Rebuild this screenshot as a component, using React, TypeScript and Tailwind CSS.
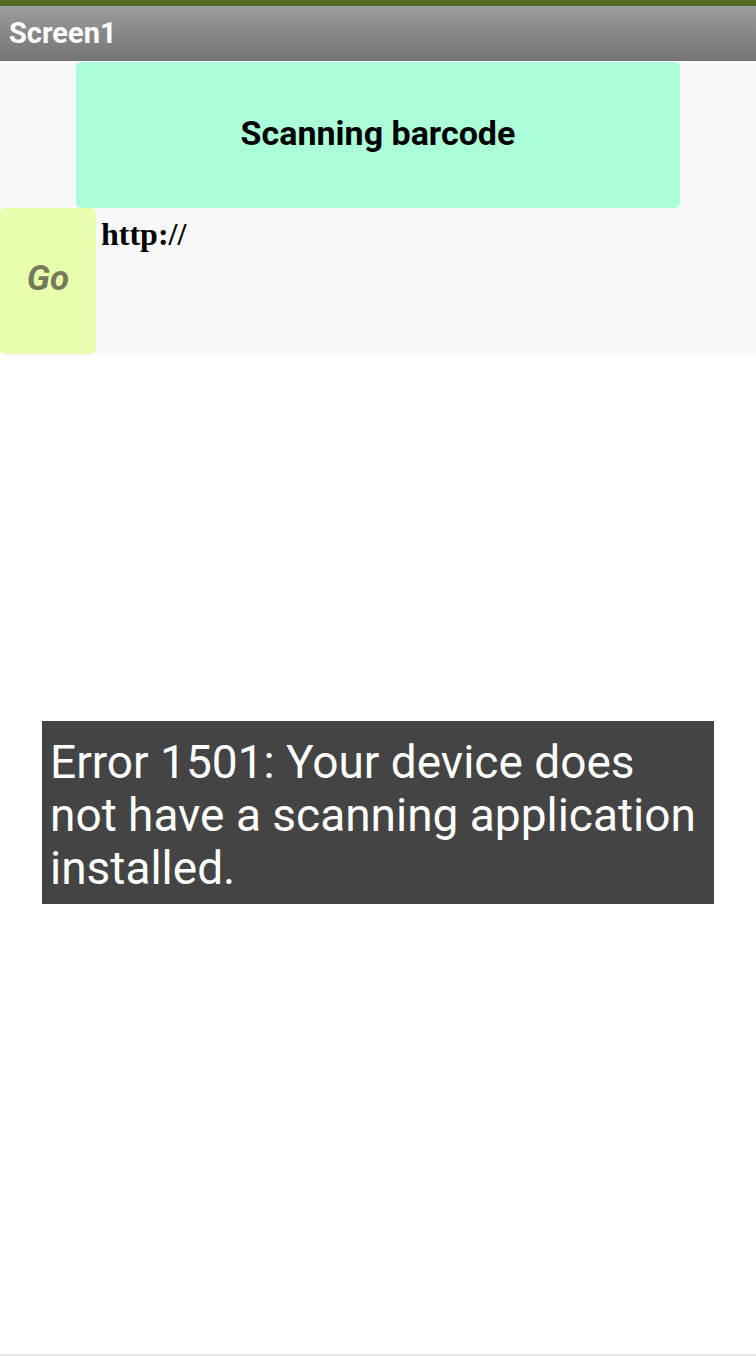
export default function App() {
  return (
    <main className="relative flex h-[1356px] w-[756px] flex-col overflow-hidden bg-white" style={{ fontFamily: "Roboto, 'Liberation Sans', sans-serif" }}>
      <div className="h-[6px] bg-[#546b24]" />
      <header className="flex h-[55px] items-center bg-gradient-to-b from-[#9c9c9c] to-[#747474] px-[9px]">
        <span className="text-[29px] font-bold leading-none text-white">Screen1</span>
      </header>

      <section className="flex h-[294px] flex-col bg-[#f9f9f9]">
        <div className="flex pl-[76px] pt-px">
          <button className="flex h-[146px] w-[604px] items-center justify-center rounded-[5px] bg-[#aaffd9] pb-[4px] text-[34px] font-bold text-black">
            Scanning barcode
          </button>
        </div>
        <div className="flex">
          <button className="flex h-[146px] w-[96px] items-center justify-center rounded-[5px] bg-[#e8ffb0] pb-[4px] text-[35px] font-bold italic text-[#76795a]">
            Go
          </button>
          <p
            className="pl-[5px] pt-[10px] text-[32px] font-bold leading-none text-black"
            style={{ fontFamily: "'Liberation Serif', 'DejaVu Serif', serif" }}
          >
            http://
          </p>
        </div>
      </section>

      <div className="flex flex-1 flex-col items-center pt-[366px]">
        <div className="w-[672px] bg-[#444444] pb-[9px] pl-[8px] pr-[2px] pt-[15px] text-[46px] leading-[53px] text-white">
          Error 1501: Your device does not have a scanning application installed.
        </div>
      </div>
      <div className="h-[2px] bg-[#e6e6e6]" />
    </main>
  );
}
